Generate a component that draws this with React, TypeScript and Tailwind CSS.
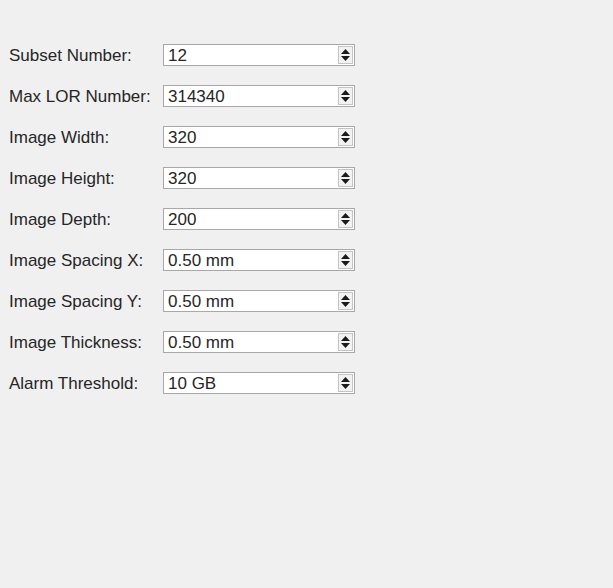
const rows: [string, string][] = [
  ["Subset Number:", "12"],
  ["Max LOR Number:", "314340"],
  ["Image Width:", "320"],
  ["Image Height:", "320"],
  ["Image Depth:", "200"],
  ["Image Spacing X:", "0.50 mm"],
  ["Image Spacing Y:", "0.50 mm"],
  ["Image Thickness:", "0.50 mm"],
  ["Alarm Threshold:", "10 GB"],
];

function SpinBox({ value }: { value: string }) {
  return (
    <div className="flex h-[22px] w-[192px] items-stretch border border-[#a8a8a8] bg-white">
      <div className="flex flex-1 items-center pl-[4px] text-[17px] leading-none text-[#262626]">
        {value}
      </div>
      <div className="my-[1px] mr-[1px] flex w-[15px] flex-col items-center justify-center gap-[2px] border border-[#c4c4c4] bg-[#f2f2f2]">
        <svg width="9" height="5" viewBox="0 0 9 5">
          <path d="M4.5 0 L9 5 L0 5 Z" fill="#1a1a1a" />
        </svg>
        <svg width="9" height="5" viewBox="0 0 9 5">
          <path d="M0 0 L9 0 L4.5 5 Z" fill="#1a1a1a" />
        </svg>
      </div>
    </div>
  );
}

export default function App() {
  return (
    <div
      className="h-[588px] w-[613px] bg-[#f0f0f0] pl-[9px] pt-[44px]"
      style={{ fontFamily: '"Liberation Sans", Arial, sans-serif' }}
    >
      <div className="flex flex-col gap-[19px]">
        {rows.map(([label, value]) => (
          <div key={label} className="flex items-center">
            <span className="w-[154px] text-[17px] leading-none text-[#262626]">
              {label}
            </span>
            <SpinBox value={value} />
          </div>
        ))}
      </div>
    </div>
  );
}
